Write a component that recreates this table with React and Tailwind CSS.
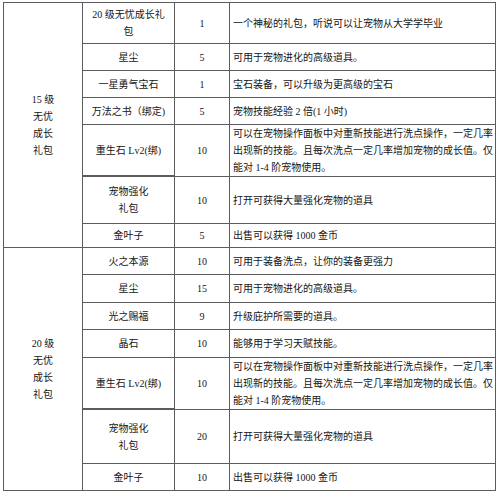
import React from 'react';

const groups = [
  {
    label: ['15 级', '无优', '成长', '礼包'],
    rows: [
      { name: ['20 级无忧成长礼', '包'], qty: '1', desc: ['一个神秘的礼包，听说可以让宠物从大学学毕业'], h: 'h-[40px]' },
      { name: ['星尘'], qty: '5', desc: ['可用于宠物进化的高级道具。'], h: 'h-[26px]' },
      { name: ['一星勇气宝石'], qty: '1', desc: ['宝石装备，可以升级为更高级的宝石'], h: 'h-[26px]' },
      { name: ['万法之书（绑定)'], qty: '5', desc: ['宠物技能经验 2 倍(1 小时)'], h: 'h-[26px]' },
      {
        name: ['重生石 Lv2(绑)'],
        qty: '10',
        desc: [
          '可以在宠物操作面板中对重新技能进行洗点操作，一定几率',
          '出现新的技能。且每次洗点一定几率增加宠物的成长值。仅',
          '能对 1-4 阶宠物使用。',
        ],
        h: 'h-[50px]',
      },
      { name: ['宠物强化', '礼包'], qty: '10', desc: ['打开可获得大量强化宠物的道具'], h: 'h-[46px]' },
      { name: ['金叶子'], qty: '5', desc: ['出售可以获得 1000 金币'], h: 'h-[23px]' },
    ],
  },
  {
    label: ['20 级', '无优', '成长', '礼包'],
    rows: [
      { name: ['火之本源'], qty: '10', desc: ['可用于装备洗点，让你的装备更强力'], h: 'h-[26px]' },
      { name: ['星尘'], qty: '15', desc: ['可用于宠物进化的高级道具。'], h: 'h-[27px]' },
      { name: ['光之赐福'], qty: '9', desc: ['升级庇护所需要的道具。'], h: 'h-[26px]' },
      { name: ['晶石'], qty: '10', desc: ['能够用于学习天赋技能。'], h: 'h-[27px]' },
      {
        name: ['重生石 Lv2(绑)'],
        qty: '10',
        desc: [
          '可以在宠物操作面板中对重新技能进行洗点操作，一定几率',
          '出现新的技能。且每次洗点一定几率增加宠物的成长值。仅',
          '能对 1-4 阶宠物使用。',
        ],
        h: 'h-[50px]',
      },
      { name: ['宠物强化', '礼包'], qty: '20', desc: ['打开可获得大量强化宠物的道具'], h: 'h-[53px]' },
      { name: ['金叶子'], qty: '10', desc: ['出售可以获得 1000 金币'], h: 'h-[26px]' },
    ],
  },
];

function Lines({ items }) {
  return items.map((t, i) => (
    <span key={i} className="block whitespace-nowrap">
      {t}
    </span>
  ));
}

export default function App() {
  return (
    <div className="w-[500px] h-[492px] bg-white pl-[3px] pt-[2px] font-['Liberation_Serif','Noto_Sans_CJK_SC',serif] text-[10px] leading-[17px] text-[#151515]">
      <div className="grid w-fit grid-cols-[78px_91px_54px_265px] gap-px bg-[#5c5c5c] p-px">
        {groups.map((g, gi) => (
          <React.Fragment key={gi}>
            <div className="row-span-7 flex items-center justify-center bg-white text-center">
              <div>
                <Lines items={g.label} />
              </div>
            </div>
            {g.rows.map((r, ri) => (
              <React.Fragment key={ri}>
                <div className={`${r.h} flex items-center justify-center bg-white text-center`}>
                  <div>
                    <Lines items={r.name} />
                  </div>
                </div>
                <div className="flex items-center justify-center bg-white">{r.qty}</div>
                <div className="flex items-center bg-white pl-[3px]">
                  <div>
                    <Lines items={r.desc} />
                  </div>
                </div>
              </React.Fragment>
            ))}
          </React.Fragment>
        ))}
      </div>
    </div>
  );
}
